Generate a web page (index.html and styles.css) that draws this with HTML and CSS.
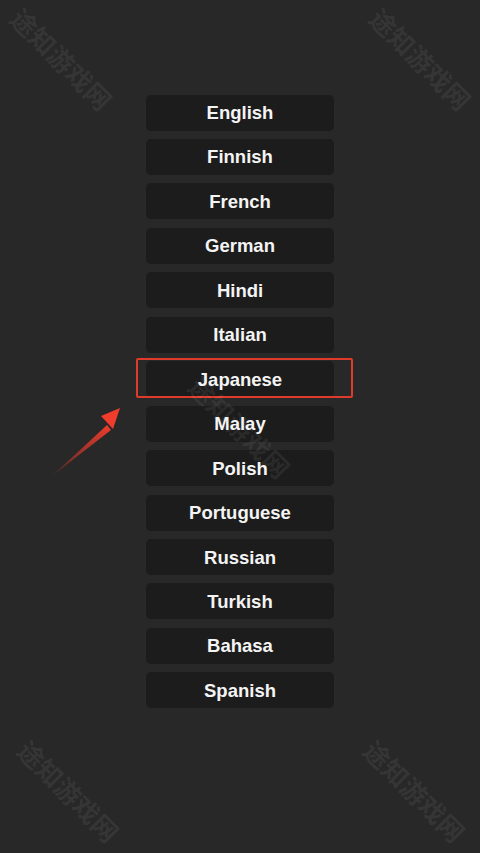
FILE: index.html
```html
<!DOCTYPE html>
<html lang="en">
<head>
    <meta charset="UTF-8">
    <meta name="viewport" content="width=device-width, initial-scale=1.0">
    <title>Language</title>
    <link rel="stylesheet" href="styles.css">
</head>
<body>
    <div class="language-list">
        <div class="lang-item">English</div>
        <div class="lang-item">Finnish</div>
        <div class="lang-item">French</div>
        <div class="lang-item">German</div>
        <div class="lang-item">Hindi</div>
        <div class="lang-item">Italian</div>
        <div class="lang-item selected">Japanese<span class="highlight"></span></div>
        <div class="lang-item">Malay</div>
        <div class="lang-item">Polish</div>
        <div class="lang-item">Portuguese</div>
        <div class="lang-item">Russian</div>
        <div class="lang-item">Turkish</div>
        <div class="lang-item">Bahasa</div>
        <div class="lang-item">Spanish</div>
    </div>

    <svg class="arrow" width="90" height="90" viewBox="0 0 90 90">
        <defs>
            <linearGradient id="arrowGrad" x1="0" y1="1" x2="1" y2="0">
                <stop offset="0" stop-color="#e8392a" stop-opacity="0.2"/>
                <stop offset="1" stop-color="#f03c2c"/>
            </linearGradient>
        </defs>
        <polygon points="2,80 57,29 61,34" fill="url(#arrowGrad)"/>
        <polygon points="70,12 51,20 63,33" fill="#f03c2c"/>
    </svg>

    <span class="watermark wm-1">途知游戏网</span>
    <span class="watermark wm-2">途知游戏网</span>
    <span class="watermark wm-3">途知游戏网</span>
    <span class="watermark wm-4">途知游戏网</span>
    <span class="watermark wm-5">途知游戏网</span>
</body>
</html>
```

FILE: styles.css
```css
body {
    margin: 0;
    width: 480px;
    height: 853px;
    background-color: #282828;
    font-family: "Liberation Sans", Arial, sans-serif;
    position: relative;
    overflow: hidden;
}

.language-list {
    display: flex;
    flex-direction: column;
    align-items: center;
    gap: 8.46px;
    padding-top: 94.5px;
}

.lang-item {
    position: relative;
    width: 188px;
    height: 36px;
    padding-top: 1px;
    box-sizing: border-box;
    background-color: #1c1c1c;
    border-radius: 5px;
    color: #f4f4f4;
    font-size: 18.5px;
    font-weight: bold;
    display: flex;
    align-items: center;
    justify-content: center;
}

.highlight {
    position: absolute;
    top: -3px;
    bottom: -1px;
    left: -10px;
    right: -19px;
    border: 2px solid #e03a2a;
    border-radius: 2px;
}

.arrow {
    position: absolute;
    left: 50px;
    top: 396px;
}

.watermark {
    position: absolute;
    font-family: "Noto Sans CJK SC", sans-serif;
    font-size: 26px;
    font-weight: bold;
    color: rgba(255, 255, 255, 0.07);
    transform: rotate(45deg);
    white-space: nowrap;
    pointer-events: none;
}

.wm-1 { left: -3px; top: 40px; }
.wm-2 { left: 356px; top: 40px; }
.wm-3 { left: 175px; top: 408px; }
.wm-4 { left: 4px; top: 772px; }
.wm-5 { left: 350px; top: 772px; }
```
